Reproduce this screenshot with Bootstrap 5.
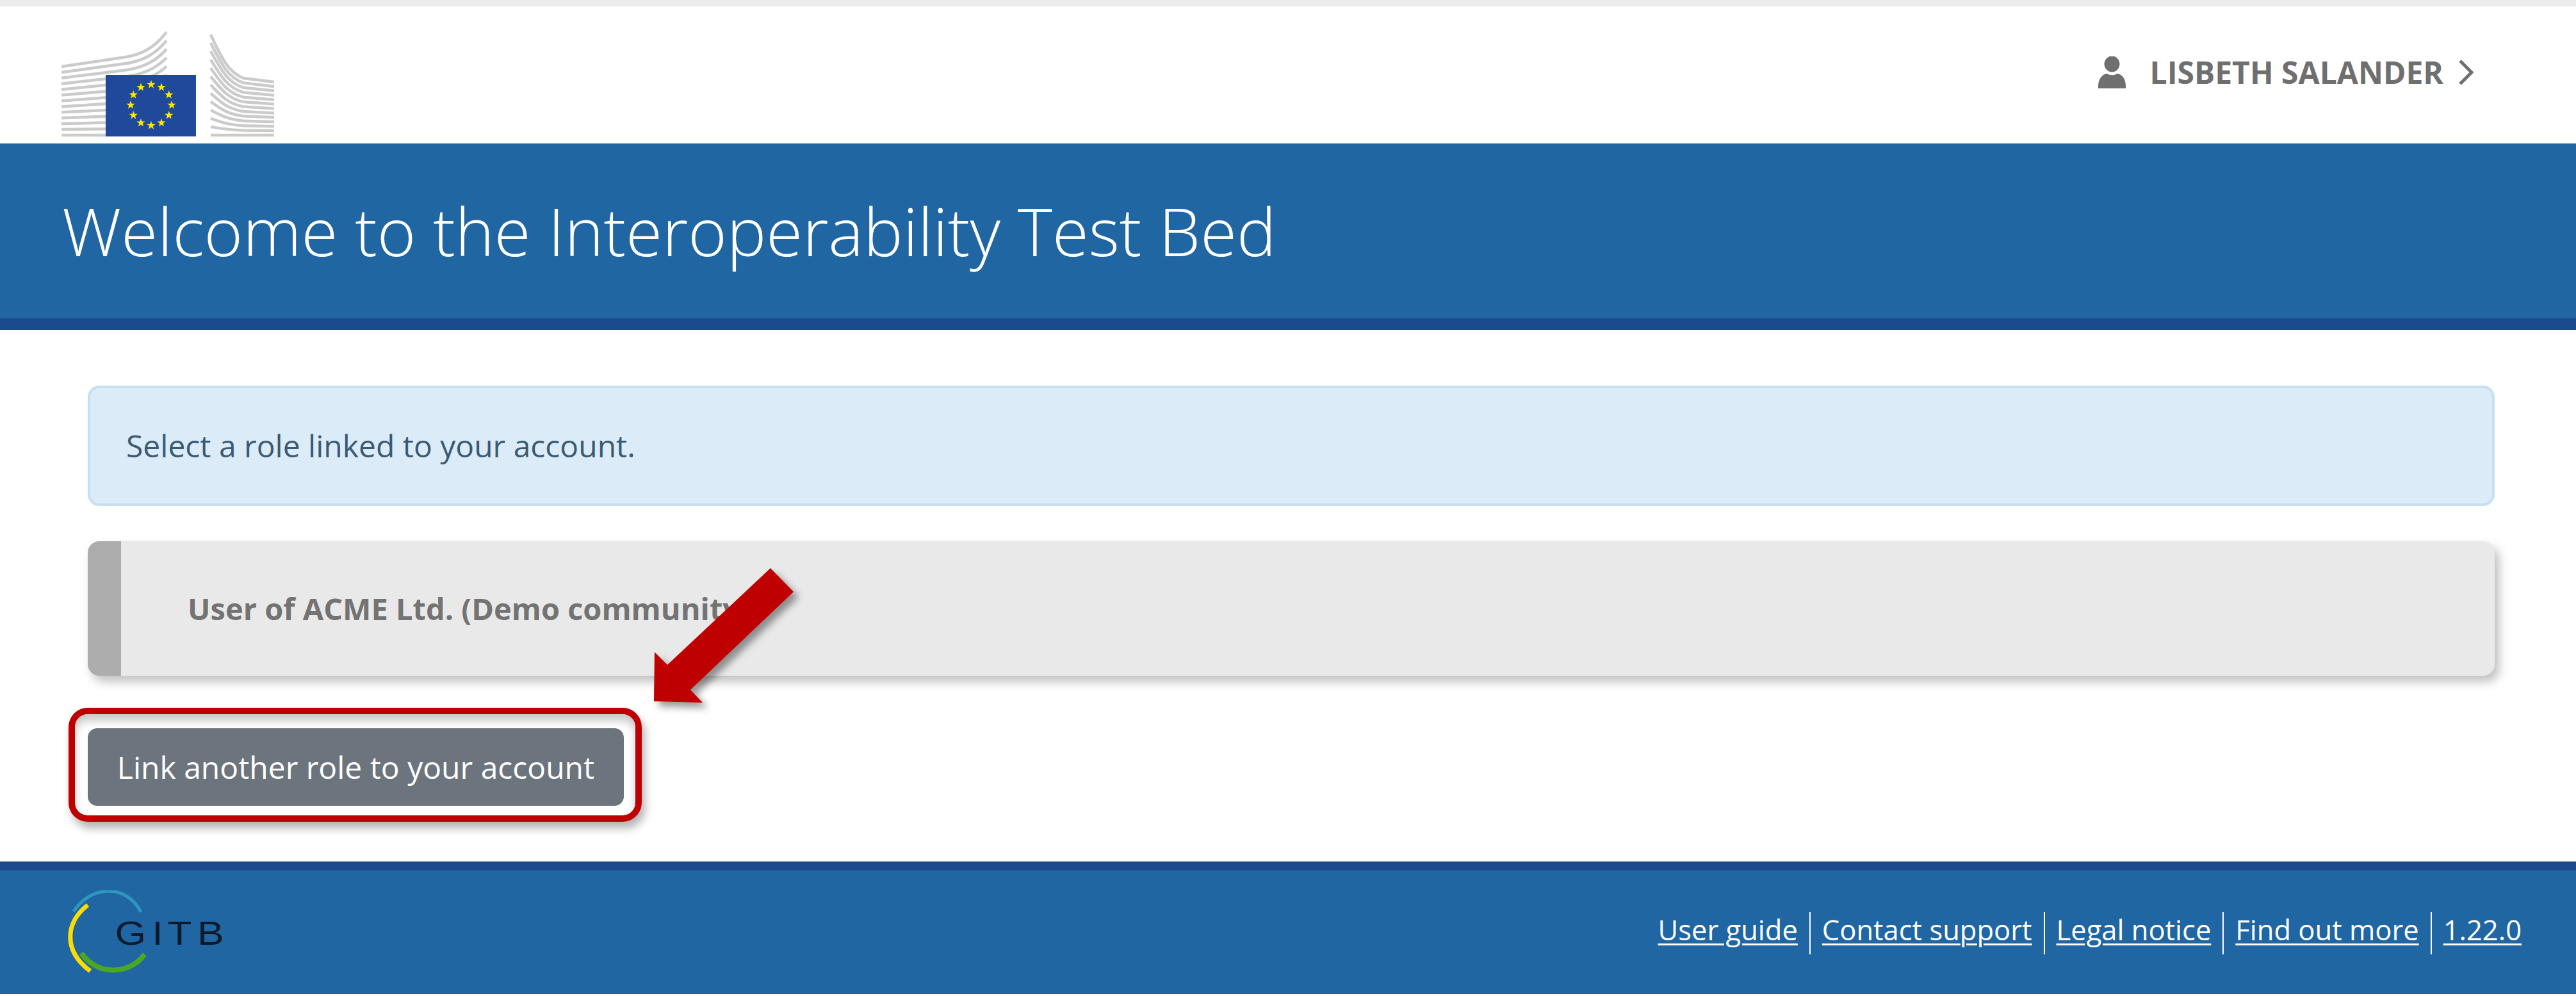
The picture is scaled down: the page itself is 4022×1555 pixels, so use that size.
<!DOCTYPE html>
<html lang="en">
<head>
  <meta charset="UTF-8">
  <title>Interoperability Test Bed</title>
  <link href="https://cdn.jsdelivr.net/npm/bootstrap@5.3.0/dist/css/bootstrap.min.css" rel="stylesheet">
  <style>
    html, body { height: 100%; }
    body { font-family: "Open Sans", "Liberation Sans", sans-serif; background: #fff; border-top: 10px solid #ececec; overflow: hidden; }
    .tb-header { height: 214px; padding: 30px 160px 0 90px; }
    .tb-user { color: #6f6f6f; font-size: 48px; font-weight: 700; line-height: 1; margin-top: 48px; }
    .tb-user-icon { margin-right: 38px; }
    .tb-user-chevron { margin-left: 24px; }
    .tb-banner { height: 291px; background: #2066a3; border-bottom: 18px solid #1c4a8e; padding-left: 97px; }
    .tb-banner h1 { color: #fff; font-size: 103.4px; font-weight: 300; margin: 0; }
    .tb-main { padding: 87px 127px 0 137px; }
    .tb-alert { height: 188px; background: #dbecf8; border: 4px solid #c6e0f1; border-radius: 18px; color: #3a5a74; font-size: 48px; padding: 0 0 0 56px; margin-bottom: 55px; }
    .tb-role { height: 210px; background: #e9e9e9; border: 0; border-left: 52px solid #adadad; border-radius: 18px; box-shadow: 7px 9px 16px rgba(0,0,0,.25); color: #737373; font-size: 47px; font-weight: 700; padding-left: 104px; }
    .tb-action { margin-top: 82px; width: 837px; position: relative; }
    .tb-action .btn { width: 100%; height: 121px; padding: 0; font-size: 48px; border-radius: 14px; background: #6c757d; border-color: #6c757d; }
    .tb-ring { position: absolute; left: -30px; top: -32px; right: -28px; bottom: -25px; border: 10px solid #bf0000; border-radius: 30px; box-shadow: 5px 10px 14px rgba(0,0,0,.3), inset 0 10px 14px rgba(0,0,0,.22); pointer-events: none; }
    .tb-arrow { position: absolute; left: 0; top: 0; pointer-events: none; }
    .tb-footer { height: 207px; margin-bottom: 3px; background: #2066a3; border-top: 14px solid #1c4a8e; border-bottom: 1px solid #1c5c96; padding: 0 85px 0 105px; }
    .tb-links { margin-top: 3px; }
    .tb-links a { color: #fff; font-size: 43.5px; line-height: 56px; padding: 0 18px 10px; border-left: 2px solid #fff; text-decoration-thickness: 3px; text-underline-offset: 5px; }
    .tb-links a:first-child { border-left: 0; }
    .tb-links a:last-child { padding-right: 0; }
  </style>
</head>
<body class="d-flex flex-column position-relative">

  <header class="tb-header d-flex justify-content-between align-items-start">
    <svg width="345" height="180" viewBox="90 40 345 180" role="img" aria-label="European Commission">
      <g id="wings" fill="none" stroke="#cbcbcb" stroke-width="4.5"></g>
      <rect x="165" y="117" width="141" height="96" fill="#20499c"/>
      <g id="stars" fill="#ffe600"></g>
    </svg>
    <div class="tb-user d-flex align-items-center">
      <svg width="43" height="50" viewBox="0 0 43 50" class="tb-user-icon" fill="#6f6f6f">
        <ellipse cx="21.5" cy="12" rx="12" ry="12.5"/>
        <path d="M0 50 C-1 34 8 27 14 27 C18 30 25 30 29 27 C36 27 44 34 43 50 Z"/>
      </svg>
      <span>LISBETH SALANDER</span>
      <svg width="23" height="38" viewBox="0 0 23 38" class="tb-user-chevron" fill="none" stroke="#6f6f6f" stroke-width="5">
        <path d="M2 1 L20 19 L2 37"/>
      </svg>
    </div>
  </header>

  <section class="tb-banner d-flex align-items-center">
    <h1>Welcome to the Interoperability Test Bed</h1>
  </section>

  <main class="tb-main flex-grow-1">
    <div class="alert tb-alert d-flex align-items-center" role="alert">Select a role linked to your account.</div>
    <div class="card tb-role justify-content-center">User of ACME Ltd. (Demo community)</div>
    <div class="tb-action">
      <button type="button" class="btn btn-secondary">Link another role to your account</button>
      <div class="tb-ring"></div>
    </div>
  </main>

  <footer class="tb-footer d-flex justify-content-between align-items-center">
    <svg width="250" height="130" viewBox="105 1390 250 130" role="img" aria-label="GITB">
      <g fill="none">
        <path d="M115 1423 C140 1383 197 1378 220 1424" stroke="#2e97bf" stroke-width="5"/>
        <path d="M137 1413 C102 1440 98 1484 141 1516" stroke="#ffdc00" stroke-width="7"/>
        <path d="M127 1488 C150 1522 200 1524 226 1490" stroke="#4aa822" stroke-width="8"/>
      </g>
      <text transform="translate(182 1475) scale(1.2 1)" x="-2 46 66 105" y="0" font-family="Liberation Sans, sans-serif" font-size="52" fill="#0e1a2c">GITB</text>
    </svg>
    <nav class="tb-links d-flex">
      <a href="#">User guide</a>
      <a href="#">Contact support</a>
      <a href="#">Legal notice</a>
      <a href="#">Find out more</a>
      <a href="#">1.22.0</a>
    </nav>
  </footer>

  <svg class="tb-arrow" width="4022" height="1555" viewBox="0 0 4022 1555">
    <defs>
      <filter id="arrowShadow" x="-30%" y="-30%" width="160%" height="160%">
        <feDropShadow dx="8" dy="8" stdDeviation="6" flood-color="#000" flood-opacity=".4"/>
      </filter>
    </defs>
    <polygon points="1203,877 1239,914 1078,1067 1097,1087 1021,1085 1022,1008 1042,1028" fill="#bf0000" filter="url(#arrowShadow)"/>
  </svg>

<script src="https://cdn.jsdelivr.net/npm/bootstrap@5.3.0/dist/js/bootstrap.bundle.min.js"></script>
<script>
  // EC logo: building lines and the ring of stars
  const wings = document.getElementById("wings");
  const stars = document.getElementById("stars");
  let lines = "";
  for (let k = 0; k < 13; k++) {
    const t = k / 12;
    const y0 = 104 + 107 * t;
    lines += `<path d="M96 ${y0} L190 ${y0 - 14 * (1 - t)} C225 ${y0 - 18 * (1 - t)} 245 ${y0 - 34 * (1 - t)} 260 ${y0 - 54 * (1 - t)}"/>`;
    const y1 = 54 + 157 * t;
    const y2 = 128 + 83 * t;
    lines += `<path d="M329 ${y1} C345 ${y1 + 34 * (1 - t)} 355 ${y1 + 58 * (1 - t)} 380 ${y1 + 68 * (1 - t)} L428 ${y2}"/>`;
  }
  wings.innerHTML = lines;

  let starShapes = "";
  for (let i = 0; i < 12; i++) {
    const a = i * Math.PI / 6;
    const cx = 236 + 32 * Math.sin(a);
    const cy = 164 - 32 * Math.cos(a);
    let pts = [];
    for (let j = 0; j < 10; j++) {
      const r = j % 2 ? 2.8 : 7;
      const b = j * Math.PI / 5;
      pts.push((cx + r * Math.sin(b)).toFixed(1) + "," + (cy - r * Math.cos(b)).toFixed(1));
    }
    starShapes += `<polygon points="${pts.join(" ")}"/>`;
  }
  stars.innerHTML = starShapes;
</script>
</body>
</html>
